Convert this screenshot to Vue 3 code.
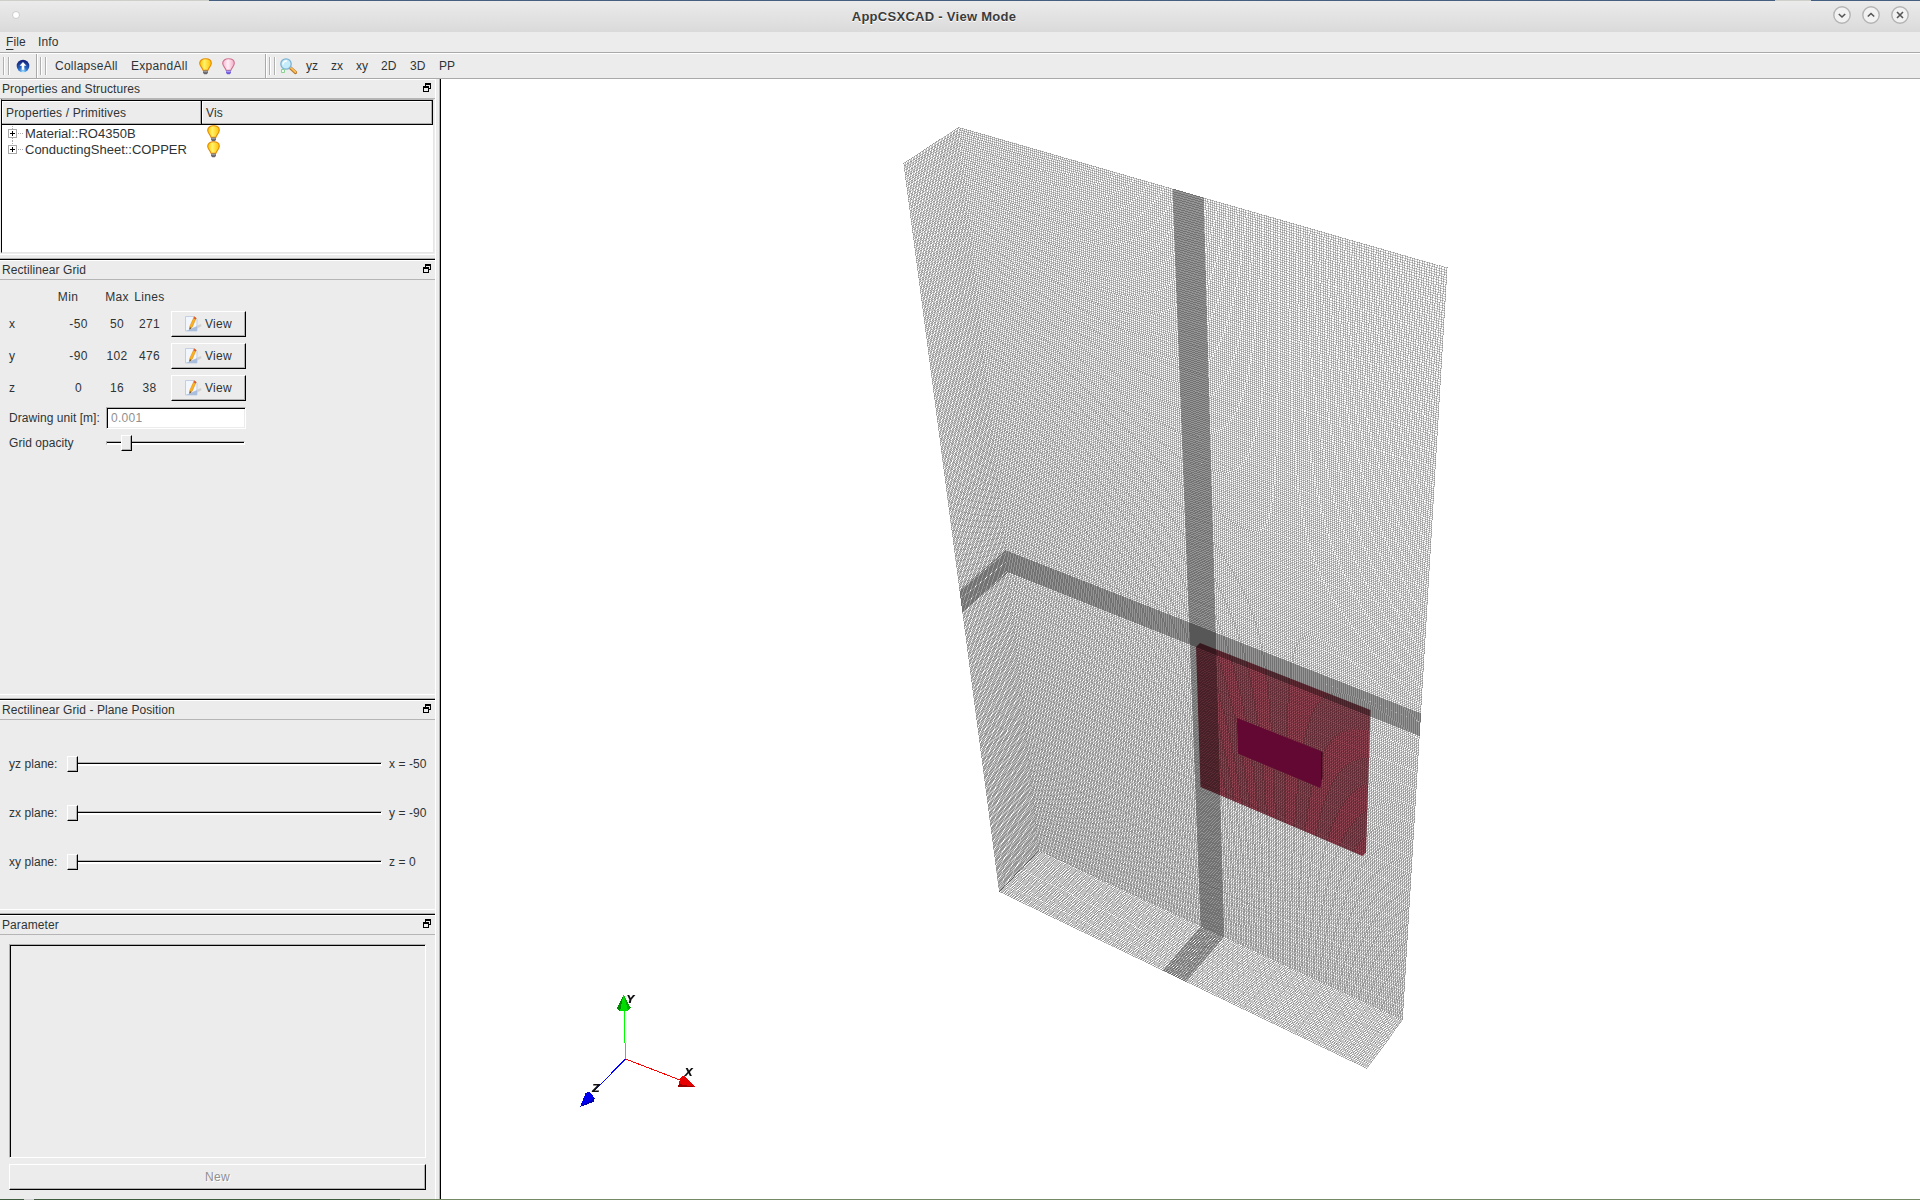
<script setup>
import { onMounted, ref } from 'vue'

const gridRows = [
  { axis: 'x', min: '-50', max: '50', lines: '271' },
  { axis: 'y', min: '-90', max: '102', lines: '476' },
  { axis: 'z', min: '0', max: '16', lines: '38' },
]
const planes = [
  { label: 'yz plane:', value: 'x = -50' },
  { label: 'zx plane:', value: 'y = -90' },
  { label: 'xy plane:', value: 'z = 0' },
]
const tree = ['Material::RO4350B', 'ConductingSheet::COPPER']
const views = [
  { label: 'yz', w: 25 },
  { label: 'zx', w: 25 },
  { label: 'xy', w: 25 },
  { label: '2D', w: 29 },
  { label: '3D', w: 29 },
  { label: 'PP', w: 30 },
]

const scene = ref(null)
const W = 1479
const H = 1120
const OX = 441
const OY = 79
const SHADE = 0.765

// Normalised mesh line positions: coarse cells with one refined interval.
function meshLines(lo, hi, fineLo, fineHi, nBefore, nFine, nAfter) {
  const out = []
  const span = hi - lo
  for (let i = 0; i < nBefore; i++) out.push((fineLo - lo) * (i / nBefore) / span)
  for (let i = 0; i < nFine; i++) out.push((fineLo - lo + (fineHi - fineLo) * (i / nFine)) / span)
  for (let i = 0; i <= nAfter; i++) out.push((fineHi - lo + (hi - fineHi) * (i / nAfter)) / span)
  return out
}

// Camera: u runs along x, v downwards along y, t along z towards the viewer.
function project(u, v, t) {
  const w = 1 - 0.11258 * u + 0.32994 * v - 0.025 * t
  return [
    (958.8 + 325.3 * u + 423 * v - 77.5 * t) / w - OX,
    (127.5 + 110.3 * u + 1003.9 * v + 32 * t) / w - OY,
  ]
}

onMounted(() => {
  const ctx = scene.value.getContext('2d')
  ctx.fillStyle = '#fff'
  ctx.fillRect(0, 0, W, H)
  const poly = (pts, fill) => {
    ctx.fillStyle = fill
    ctx.beginPath()
    pts.forEach(([x, y], i) => (i ? ctx.lineTo(x - OX, y - OY) : ctx.moveTo(x - OX, y - OY)))
    ctx.closePath()
    ctx.fill()
  }
  poly([[1196, 647], [1200, 643], [1370.5, 710], [1366, 852.5], [1362.5, 856], [1200.5, 787]], '#9c4858')

  const img = ctx.getImageData(0, 0, W, H)
  const px = img.data
  // Lines of one family darken a pixel at most twice, so refined bands stay even.
  const family = (values, from, to) => {
    const hits = new Uint8Array(W * H)
    values.forEach((s) => {
      const [x0, y0] = from(s)
      const [x1, y1] = to(s)
      const n = Math.max(1, Math.round(Math.max(Math.abs(x1 - x0), Math.abs(y1 - y0))))
      for (let i = 0; i <= n; i++) {
        const x = Math.floor(x0 + ((x1 - x0) * i) / n)
        const y = Math.floor(y0 + ((y1 - y0) * i) / n)
        const k = y * W + x
        if (hits[k] >= 2) continue
        hits[k]++
        px[k * 4] *= SHADE
        px[k * 4 + 1] *= SHADE
        px[k * 4 + 2] *= SHADE
      }
    })
  }
  const xs = meshLines(-50, 50, -3.25, 3.1, 104, 62, 104)
  const ys = meshLines(-102, 90, -3.25, 2.75, 219, 62, 194)
  const zs = Array.from({ length: 37 }, (_, i) => (i + 1) / 37)
  family(xs, (u) => project(u, 0, 0), (u) => project(u, 1, 0))
  family(ys, (v) => project(0, v, 0), (v) => project(1, v, 0))
  family(zs, (t) => project(0, 0, t), (t) => project(0, 1, t))
  family(ys, (v) => project(0, v, 0.02), (v) => project(0, v, 1))
  family(zs, (t) => project(0, 1, t), (t) => project(1, 1, t))
  family(xs, (u) => project(u, 1, 0.02), (u) => project(u, 1, 1))
  ctx.putImageData(img, 0, 0)

  poly([[1237, 718], [1322, 751.5], [1322, 778], [1320.500, 788], [1238, 753.5]], '#620832')
  poly([[1321, 752], [1322.5, 752], [1322.5, 778], [1321, 780]], '#3c041c')
})
</script>

<template>
  <div class="app">
    <svg width="0" height="0" class="defs">
      <defs>
        <linearGradient id="yel" x1="0" x2="1" y1="0" y2="0">
          <stop offset="0" stop-color="#ffc400" /><stop offset=".4" stop-color="#fff36a" /><stop offset="1" stop-color="#ffc000" />
        </linearGradient>
        <linearGradient id="pnk" x1="0" x2="1" y1="0" y2="0">
          <stop offset="0" stop-color="#f5b4cf" /><stop offset=".45" stop-color="#fff0f6" /><stop offset="1" stop-color="#f3abc8" />
        </linearGradient>
        <symbol id="bulb" viewBox="0 0 13 17">
          <path d="M4 12.2C3.8 9.8.7 8.4.7 5.3.7 2.5 3.2.8 6.5.8s5.8 1.7 5.8 4.5c0 3.1-3.1 4.5-3.3 6.9z" fill="url(#yel)" stroke="#e58a00" stroke-width="1.1" />
          <path d="M4 12.6h5v2.2L7.8 16.3H5.2L4 14.8z" fill="#66646a" /><path d="M4.3 13.7h4.4" stroke="#b8b8b8" stroke-width=".8" />
        </symbol>
        <symbol id="bulboff" viewBox="0 0 13 17">
          <path d="M4 12.2C3.8 9.8.7 8.4.7 5.3.7 2.5 3.2.8 6.5.8s5.8 1.7 5.8 4.5c0 3.1-3.1 4.5-3.3 6.9z" fill="url(#pnk)" stroke="#d0708c" stroke-width="1.1" />
          <path d="M4 12.6h5v2.2L7.8 16.3H5.2L4 14.8z" fill="#6a58d8" /><path d="M4.3 13.7h4.4" stroke="#cdc6fa" stroke-width=".8" />
        </symbol>
        <symbol id="float" viewBox="0 0 8 9">
          <path d="M2 0h6v6H6V5h1V2H3v1H2z" fill="#000" />
          <path d="M0 3h6v6H0zM1 5v3h4V5z" fill="#000" fill-rule="evenodd" />
        </symbol>
        <symbol id="edit" viewBox="0 0 17 16">
          <path d="M9 11l7-3 .5 2-6.5 4z" fill="#d2d2d2" />
          <path d="M.5.5h9l2.500 2.500v12H.5z" fill="#f2f6fd" stroke="#c3cee2" />
          <path d="M1 15h11V10z" fill="#a9bddd" />
          <path d="M9.200.8l2 1.200-4.200 9.500-2.500 2 .4-3.300z" fill="#f9b320" stroke="#e58a10" stroke-width=".6" />
          <path d="M9.200.8l2 1.200-.7 1.500-2-1.200z" fill="#e2562d" /><path d="M4.900 11.200l1.300.9-1.700 1.500z" fill="#333" />
        </symbol>
      </defs>
    </svg>

    <div class="topstrip"><i class="s1"></i><i class="s2"></i><i class="s3"></i><i class="s2 last"></i></div>
    <header class="titlebar">
      <span class="dot"></span>
      <span class="caption">AppCSXCAD - View Mode</span>
      <span class="wbtns">
        <svg v-for="(d, i) in ['M5.800 8l3.200 3 3.200-3', 'M5.800 10.500l3.200-3 3.200 3', 'M6 6l6 6M12 6l-6 6']" :key="i" width="18" height="18" viewBox="0 0 18 18">
          <circle cx="9" cy="9" r="8.200" fill="#f2f2f2" stroke="#b4b4b4" stroke-width="1.400" />
          <path :d="d" fill="none" stroke="#555" stroke-width="1.600" />
        </svg>
      </span>
    </header>
    <nav class="menubar"><span class="mfile"><u>F</u>ile</span><span>Info</span></nav>

    <div class="toolbar">
      <span class="grip g1"></span>
      <svg class="up" width="14" height="14" viewBox="0 0 14 14">
        <defs><radialGradient id="orb" cx=".5" cy=".95" r=".85"><stop offset="0" stop-color="#a8e8ff" /><stop offset=".4" stop-color="#2a70cc" /><stop offset="1" stop-color="#14247c" /></radialGradient></defs>
        <circle cx="7" cy="7" r="6.300" fill="url(#orb)" />
        <path d="M7 3l3.400 3.800H8.300v4H5.700v-4H3.600z" fill="#fff" />
      </svg>
      <span class="vsep"></span>
      <span class="grip g2"></span>
      <span class="collapse">CollapseAll</span>
      <span class="expand">ExpandAll</span>
      <svg class="b1" width="13" height="17"><use href="#bulb" /></svg>
      <svg class="b2" width="13" height="17"><use href="#bulboff" /></svg>
      <span class="vsep"></span>
      <span class="grip g3"></span>
      <svg class="mag" width="17" height="17" viewBox="0 0 17 17">
        <path d="M10 9.500l5.500 5" stroke="#b9762a" stroke-width="3.200" stroke-linecap="round" /><path d="M10.500 9.500l5 4.700" stroke="#ffc35a" stroke-width="1.700" stroke-linecap="round" />
        <circle cx="6" cy="6" r="5.200" fill="#c4ecfb" stroke="#7fb2d2" stroke-width="1.300" /><path d="M3 6.500C3 4 5 2.800 7 3" fill="none" stroke="#fff" stroke-width="1.500" />
        <path d="M1.500 11.500h3v3h-3z" fill="#eef8ee" stroke="#8ccf94" />
      </svg>
      <span v-for="v in views" :key="v.label" :style="{ width: v.w + 'px' }">{{ v.label }}</span>
    </div>

    <div class="main">
      <aside class="side">
        <section class="dock d1">
          <h2>Properties and Structures<svg width="8" height="9"><use href="#float" /></svg></h2>
          <div class="tree">
            <div class="thead"><span class="c1">Properties / Primitives</span><span class="c2">Vis</span></div>
            <div v-for="(t, i) in tree" :key="t" class="trow">
              <svg class="exp" width="16" height="16" viewBox="0 0 16 16">
                <path :d="i ? 'M4.500 0v4M10 8.500h6' : 'M4.500 1v3M4.500 13v3M10 8.500h6'" stroke="#aaa" stroke-dasharray="1 1" />
                <rect x=".5" y="4.500" width="8" height="8" fill="#fff" stroke="#a8a8a8" />
                <path d="M2 8.500h5M4.500 6v5" stroke="#000" />
              </svg>
              <span class="tname">{{ t }}</span>
              <svg width="13" height="17"><use href="#bulb" /></svg>
            </div>
          </div>
        </section>

        <section class="dock d2">
          <h2>Rectilinear Grid<svg width="8" height="9"><use href="#float" /></svg></h2>
          <div class="grow ghead"><span class="ax"></span><span class="mn">Min</span><span class="mx">Max</span><span class="ln">Lines</span></div>
          <div v-for="r in gridRows" :key="r.axis" class="grow">
            <span class="ax">{{ r.axis }}</span><span class="mn">{{ r.min }}</span><span class="mx">{{ r.max }}</span><span class="ln">{{ r.lines }}</span>
            <button class="view"><svg width="17" height="16"><use href="#edit" /></svg>View</button>
          </div>
          <div class="unit"><span>Drawing unit [m]:</span><div class="field">0.001</div></div>
          <div class="opacity"><span>Grid opacity</span><div class="slider"><i class="groove"></i><b class="knob k15"></b></div></div>
        </section>

        <section class="dock d3">
          <h2>Rectilinear Grid - Plane Position<svg width="8" height="9"><use href="#float" /></svg></h2>
          <div class="planes">
            <div v-for="p in planes" :key="p.label" class="plane">
              <span class="pl">{{ p.label }}</span><div class="slider"><i class="groove"></i><b class="knob"></b></div><span class="pv">{{ p.value }}</span>
            </div>
          </div>
        </section>

        <section class="dock d4">
          <h2>Parameter<svg width="8" height="9"><use href="#float" /></svg></h2>
          <div class="plist"></div>
          <button class="new">New</button>
        </section>
      </aside>
      <div class="split"></div>
      <div class="viewport">
        <canvas ref="scene" :width="W" :height="H"></canvas>
        <svg class="axes" width="160" height="160" viewBox="0 0 160 160" shape-rendering="crispEdges">
          <path d="M65.500 89L64 40" stroke="#0f0" /><path d="M65.500 89L120 110" stroke="#f00" /><path d="M65.500 89L34 121" stroke="#00f" />
          <path d="M63.500 24.500L57 38.500l3 2.500h7.500l3-3z" fill="#0d0" /><path d="M63.500 24.500L57 38.500l3 2.500z" fill="#008a00" /><path d="M64 26l4 15 2.800-3z" fill="#00a800" />
          <path d="M136 117l-12.500-11.500-3 2.500-2.500 8.500z" fill="#e60000" /><path d="M136 117h-18l.7-3z" fill="#900" />
          <path d="M20 137l5.500-14 4-1.500 5 6.500-1 4z" fill="#00e" /><path d="M20 137l13.500-5 1.500-4z" fill="#0000b0" />
          <g class="axl"><text x="66.500" y="32.500">Y</text><text x="124.500" y="105.500">X</text><text x="32" y="121.500">Z</text></g>
        </svg>
      </div>
    </div>
    <div class="botstrip"><i class="q1"></i><i class="q2"></i><i class="q3"></i><i class="q4"></i></div>
  </div>
</template>

<style>
html, body { margin: 0; overflow: hidden; }
</style>

<style scoped>
* { box-sizing: border-box; }
.app { width: 1920px; height: 1200px; display: flex; flex-direction: column; background: #ececec; color: #2e3436; font: 12px/16px "Liberation Sans", Arial, sans-serif; letter-spacing: .1px; white-space: nowrap; }
.defs { position: absolute; }
svg { display: block; flex: none; }
.topstrip, .botstrip { display: flex; height: 1px; flex: none; }
.s1 { width: 209px; background: #cfcfc9; }
.s2 { width: 1566px; background: #455f80; }
.s3 { width: 36px; background: #cfcfcb; }
.last { flex: 1; }
.titlebar { height: 31px; flex: none; display: flex; align-items: center; background: linear-gradient(#ebebeb, #dadada); padding-bottom: 4px; }
.dot { width: 8px; height: 8px; margin-left: 12px; border-radius: 50%; background: #fff; border: 1px solid #ccc; }
.caption { flex: 1; text-align: center; font: bold 13px/16px "Liberation Sans", Arial, sans-serif; letter-spacing: .28px; color: #3b3b3b; text-shadow: 0 1px #fff; padding: 4px 0 0 15px; }
.wbtns { display: flex; gap: 11px; margin-right: 11px; }
.menubar { height: 21px; flex: none; display: flex; padding: 2px 0 0 6px; border-bottom: 1px solid #a9a9a9; }
.mfile { width: 32px; }
.mfile u { text-underline-offset: 3px; }
.toolbar { height: 26px; flex: none; display: flex; align-items: center; border-top: 1px solid #fff; border-bottom: 1px solid #a9a9a9; }
.grip { width: 6px; height: 18px; border: solid #b0b0b0; border-width: 0 1px; box-shadow: inset 1px 0 #fff, 1px 0 #fff; }
.g1 { margin-left: 3px; }
.up { margin: 0 6px 0 7px; width: 14px; }
.vsep { width: 2px; height: 24px; border-left: 1px solid #a9a9a9; background: #fff; }
.g2 { margin: 0 9px 0 2px; }
.collapse { width: 76px; letter-spacing: .25px; }
.expand { width: 68px; letter-spacing: .3px; }
.b2 { margin: 0 30px 0 10px; }
.g3 { margin: 0 5px 0 2px; }
.mag { margin-right: 9px; }
.main { flex: 1; display: flex; min-height: 0; }
.side { width: 435px; display: flex; flex-direction: column; }
.dock { flex: none; }
.d1 { height: 181px; }
.d2 { height: 440px; }
.d3 { height: 215px; }
.d4 { height: 284px; }
.d1, .d2, .d3 { border-bottom: 1px solid #000; box-shadow: inset 0 -1px #b0b0b0, inset 0 -4px #ececec, inset 0 -5px #fff; }
h2 { margin: 0; height: 20px; padding: 1px 4px 0 2px; display: flex; justify-content: space-between; border-top: 1px solid #fff; border-bottom: 1px solid #b5b5b5; font-size: 12px; font-weight: normal; line-height: 17px; letter-spacing: .08px; }
h2 svg { margin-top: 2px; }
.tree { height: 154px; margin: 0 1px; border: solid #e6e6e6; border-width: 1px; border-top-color: #b5b5b5; border-left-color: #000; background: #fff; }
.thead { height: 25px; width: 431px; display: flex; border: 1px solid #000; border-left: 0; background: #ececec; line-height: 24px; letter-spacing: .15px; }
.c1 { width: 200px; padding-left: 4px; border-right: 1px solid #000; box-shadow: inset -1px -1px #b0b0b0, inset 1px 1px #fff; }
.c2 { flex: 1; padding-left: 4px; box-shadow: inset -1px -1px #b0b0b0, inset 1px 1px #fff; }
.trow { height: 16px; display: flex; align-items: flex-start; padding-left: 6px; }
.tname { width: 183px; padding-left: 1px; font-size: 13px; letter-spacing: 0; line-height: 17px; }
.grow { display: flex; height: 32px; align-items: center; padding-left: 9px; letter-spacing: .35px; }
.ghead { height: 28px; padding-top: 6px; }
.ax { width: 48px; }
.mn { width: 43px; text-align: center; }
.ghead .mn { padding-right: 21px; }
.mx { width: 34px; text-align: center; }
.ln { width: 31px; text-align: center; }
.view { width: 75px; height: 26px; margin: 0 0 0 6px; padding: 0 0 0 13px; display: flex; align-items: center; gap: 3px; font: inherit; letter-spacing: .3px; color: inherit; background: #ececec; border: 1px solid; border-color: #fff #000 #000 #fff; box-shadow: inset -1px -1px #b0b0b0; }
.unit { display: flex; align-items: center; height: 22px; margin-top: 3px; padding-left: 9px; }
.unit span, .opacity span { width: 97px; letter-spacing: .05px; }
.field { width: 140px; height: 22px; padding-left: 4px; line-height: 20px; background: #fff; color: #909090; letter-spacing: .3px; border: 1px solid; border-color: #b0b0b0 #fff #fff #b0b0b0; box-shadow: inset 1px 1px #000, inset -1px -1px #ececec; }
.opacity { display: flex; height: 16px; margin-top: 6px; padding-left: 9px; align-items: center; }
.opacity .slider { width: 139px; }
.slider { position: relative; height: 16px; }
.groove { position: absolute; left: 0; right: 0; top: 6px; height: 4px; border: 1px solid; border-color: #b0b0b0 #fff #fff #b0b0b0; background: linear-gradient(#000 50%, #fff 50%); }
.knob { position: absolute; left: 0; top: 0; width: 11px; height: 16px; background: #ececec; border: 1px solid; border-color: #fff #000 #000 #fff; box-shadow: inset -1px -1px #b0b0b0; }
.k15 { left: 15px; }
.planes { padding: 19px 0 0 9px; }
.plane { display: flex; height: 49px; align-items: center; letter-spacing: .05px; }
.plane .slider { width: 315px; }
.pl { width: 58px; }
.pv { padding-left: 7px; }
.plist { margin: 9px 9px 0; height: 214px; border: 1px solid; border-color: #b0b0b0 #fff #fff #b0b0b0; box-shadow: inset 1px 1px #000; }
.new { display: block; width: 417px; height: 26px; margin: 6px 0 0 9px; font: inherit; letter-spacing: .3px; color: #909090; text-shadow: 1px 1px #fff; background: #ececec; border: 1px solid; border-color: #fff #000 #000 #fff; box-shadow: inset -1px -1px #b0b0b0; }
.split { width: 6px; border: solid; border-width: 0 1px; border-color: #fff #000 #000 #fff; box-shadow: inset -1px 0 #b0b0b0; }
.viewport { flex: 1; position: relative; background: #fff; overflow: hidden; }
canvas { display: block; }
.axes { position: absolute; left: 119px; top: 891px; }
.axl text { font: italic bold 11px "DejaVu Sans", sans-serif; letter-spacing: 0; fill: #111; }
.q1 { width: 24px; background: #3f5c3f; }
.q2 { width: 10px; background: #cfcfcf; }
.q3 { width: 366px; background: #3f5c3f; }
.q4 { flex: 1; background: #748a64; }
</style>
